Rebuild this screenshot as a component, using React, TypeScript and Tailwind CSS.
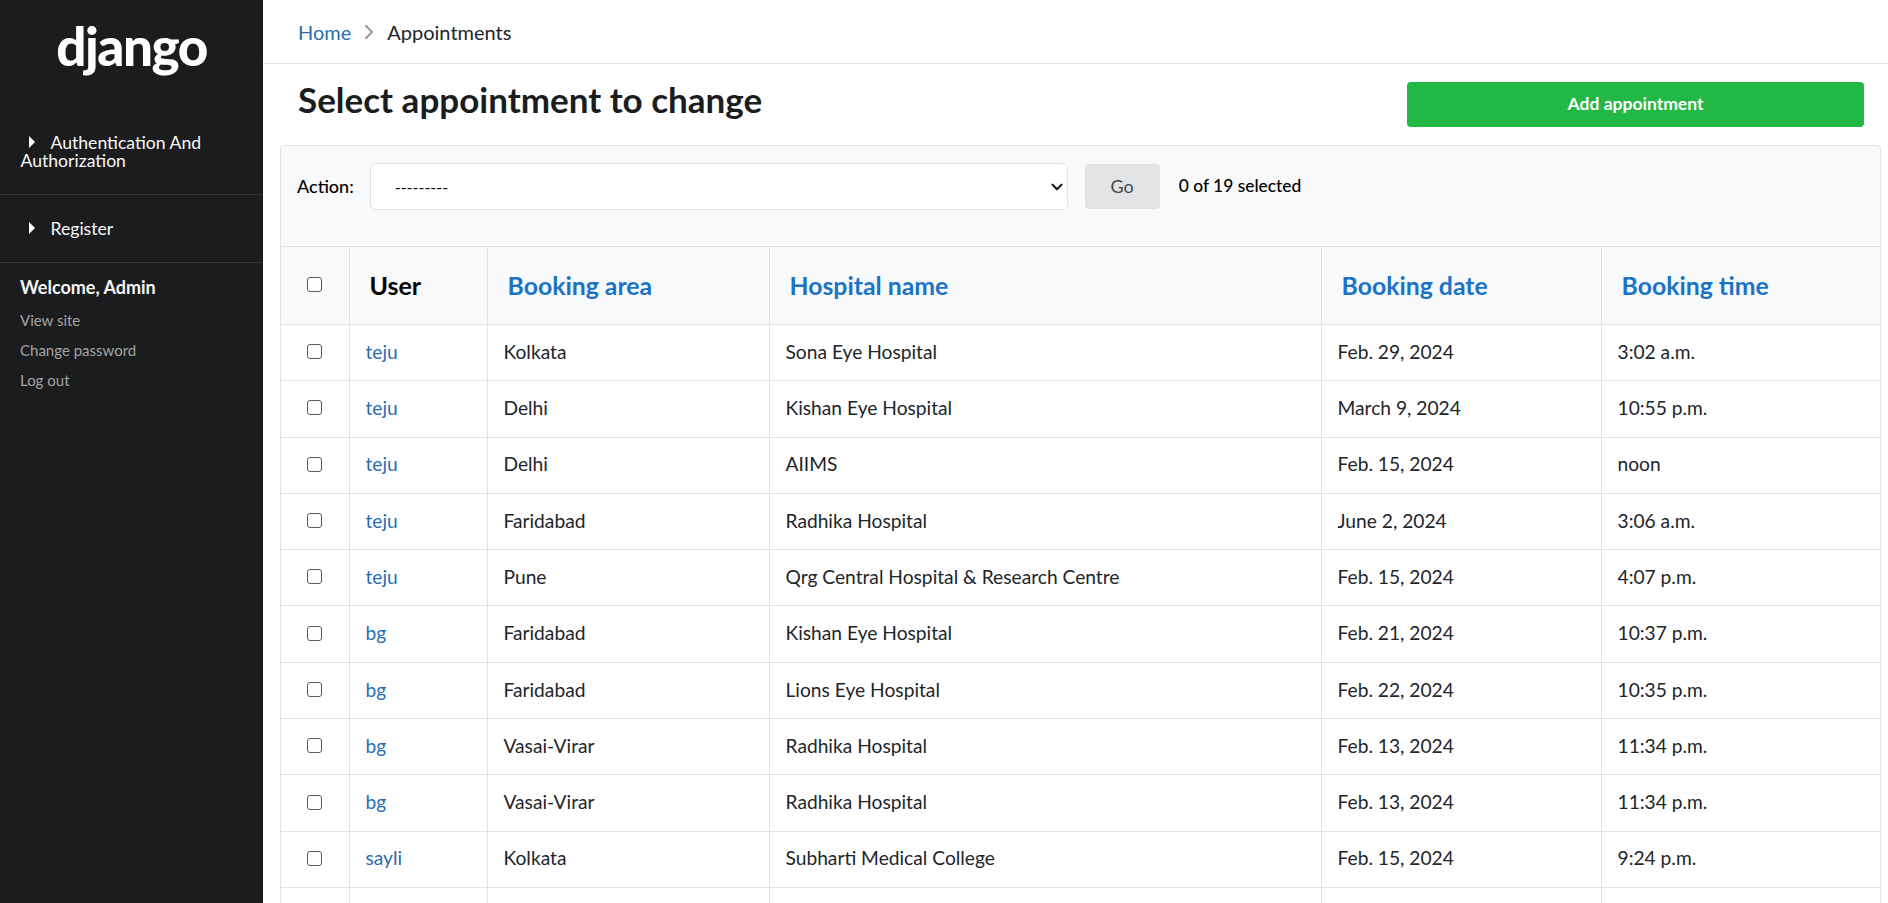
import { ChevronRight, ChevronDown } from "lucide-react";

type Row = { user: string; area: string; hospital: string; date: string; time: string };

const rows: Row[] = [
  { user: "teju", area: "Kolkata", hospital: "Sona Eye Hospital", date: "Feb. 29, 2024", time: "3:02 a.m." },
  { user: "teju", area: "Delhi", hospital: "Kishan Eye Hospital", date: "March 9, 2024", time: "10:55 p.m." },
  { user: "teju", area: "Delhi", hospital: "AIIMS", date: "Feb. 15, 2024", time: "noon" },
  { user: "teju", area: "Faridabad", hospital: "Radhika Hospital", date: "June 2, 2024", time: "3:06 a.m." },
  { user: "teju", area: "Pune", hospital: "Qrg Central Hospital & Research Centre", date: "Feb. 15, 2024", time: "4:07 p.m." },
  { user: "bg", area: "Faridabad", hospital: "Kishan Eye Hospital", date: "Feb. 21, 2024", time: "10:37 p.m." },
  { user: "bg", area: "Faridabad", hospital: "Lions Eye Hospital", date: "Feb. 22, 2024", time: "10:35 p.m." },
  { user: "bg", area: "Vasai-Virar", hospital: "Radhika Hospital", date: "Feb. 13, 2024", time: "11:34 p.m." },
  { user: "bg", area: "Vasai-Virar", hospital: "Radhika Hospital", date: "Feb. 13, 2024", time: "11:34 p.m." },
  { user: "sayli", area: "Kolkata", hospital: "Subharti Medical College", date: "Feb. 15, 2024", time: "9:24 p.m." },
];

const headers = ["Booking area", "Hospital name", "Booking date", "Booking time"];

function Caret() {
  return (
    <svg width="8" height="14" viewBox="0 0 8 14" className="inline-block mr-[15px] ml-[7px] align-[0px]">
      <path d="M1 1 L7 7 L1 13 Z" fill="#ffffff" />
    </svg>
  );
}

function Checkbox() {
  return <span className="block w-[15px] h-[15px] mx-auto -mt-[2px] rounded-[3px] border border-[#555b61] bg-white" />;
}

function Sidebar() {
  return (
    <aside className="w-[263px] shrink-0 bg-[#1b1c1e] text-white">
      <div className="h-[108px] pt-[6px] flex justify-center">
        <span className="text-[53px] leading-[80px] font-black tracking-[-1.5px]">django</span>
      </div>
      <div className="pl-[20.5px] pr-[20px] pt-[26px] pb-[24px] border-b border-[#33353a] text-[17.6px] leading-[18px] text-[#f8f8f8]">
        <Caret />
        Authentication And Authorization
      </div>
      <div className="pl-[20.5px] pr-[20px] pt-[25px] pb-[24px] border-b border-[#33353a] text-[17.6px] leading-[18px] text-[#f8f8f8]">
        <Caret />
        Register
      </div>
      <div className="px-[20px] pt-[12px]">
        <div className="text-[18px] leading-[24px] font-bold text-[#f4f4f4]">Welcome, Admin</div>
        <div className="mt-[6px] text-[15px] leading-[30px] text-[#a3a3a3]">
          <div>View site</div>
          <div>Change password</div>
          <div>Log out</div>
        </div>
      </div>
    </aside>
  );
}

export default function App() {
  return (
    <div className="flex h-[903px] overflow-hidden bg-white font-['Lato','Liberation_Sans',sans-serif] text-[#212529]">
      <Sidebar />
      <main className="flex-1 min-w-0">
        <div className="h-[64px] border-b border-[#dee2e6] flex items-center pl-[35px] text-[20px]">
          <span className="text-[#2b6cb0]">Home</span>
          <ChevronRight size={24} strokeWidth={2.2} className="mx-[6px] text-[#9a9ea3]" />
          <span className="text-[#212529]">Appointments</span>
        </div>
        <div className="h-[81px] flex items-start justify-between pl-[35px] pr-[24px]">
          <h1 className="text-[35px] leading-[42px] font-bold mt-[14px] text-[#1b1c1e]">Select appointment to change</h1>
          <button className="w-[457px] h-[45px] mt-[18px] rounded-[4px] bg-[#21b845] text-white text-[17.5px] font-bold">
            Add appointment
          </button>
        </div>
        <div className="ml-[17px] mr-[7px] rounded-t-[5px] border border-[#dee2e6] border-b-0">
          <div className="h-[100px] bg-[#f8f9fb] rounded-t-[5px] flex items-start pl-[16px] pt-[17px] text-black">
            <span className="text-[18px] leading-[46px] font-medium">Action:</span>
            <div className="ml-[16px] w-[698px] h-[47px] bg-white border border-[#dee2e6] rounded-[6px] flex items-center justify-between pl-[24px] pr-[1px] text-[16px]">
              <span>---------</span>
              <ChevronDown size={18} strokeWidth={3} className="text-[#222]" />
            </div>
            <button className="ml-[17px] w-[75px] h-[45px] mt-[1px] pb-[1px] bg-[#e1e3e5] rounded-[4px] text-[18px] text-[#44484c]">Go</button>
            <span className="ml-[19px] text-[17.4px] leading-[46px] font-medium">0 of 19 selected</span>
          </div>
          <table className="w-full table-fixed border-collapse">
            <colgroup>
              <col className="w-[68px]" />
              <col className="w-[138px]" />
              <col className="w-[282px]" />
              <col className="w-[552px]" />
              <col className="w-[280px]" />
              <col />
            </colgroup>
            <thead>
              <tr className="h-[78px] bg-[#f8f9fb] border-t border-b border-[#dee2e6]">
                <th className="border-r border-[#dee2e6]"><Checkbox /></th>
                <th className="border-r border-[#dee2e6] pl-[20px] text-left text-[25px] font-bold text-black">User</th>
                {headers.map((h) => (
                  <th key={h} className="border-r last:border-r-0 border-[#dee2e6] pl-[20px] text-left text-[24.8px] font-bold text-[#1a73c5]">{h}</th>
                ))}
              </tr>
            </thead>
            <tbody>
              {rows.map((r, i) => (
                <tr key={i} className="h-[56.3px] border-b border-[#dee2e6] text-[19.2px]">
                  <td className="border-r border-[#dee2e6]"><Checkbox /></td>
                  <td className="border-r border-[#dee2e6] pl-[16px] pb-[1px] text-[#2b6cb0]">{r.user}</td>
                  <td className="border-r border-[#dee2e6] pl-[16px] pb-[1px]">{r.area}</td>
                  <td className="border-r border-[#dee2e6] pl-[16px] pb-[1px]">{r.hospital}</td>
                  <td className="border-r border-[#dee2e6] pl-[16px] pb-[1px]">{r.date}</td>
                  <td className="pl-[16px] pb-[1px]">{r.time}</td>
                </tr>
              ))}
              <tr className="h-[56.3px]">
                <td className="border-r border-[#dee2e6]" />
                <td className="border-r border-[#dee2e6]" />
                <td className="border-r border-[#dee2e6]" />
                <td className="border-r border-[#dee2e6]" />
                <td className="border-r border-[#dee2e6]" />
                <td />
              </tr>
            </tbody>
          </table>
        </div>
      </main>
    </div>
  );
}
